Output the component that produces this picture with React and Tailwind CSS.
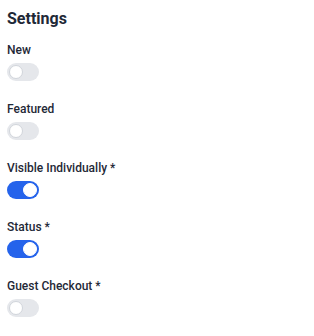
import React, { useState } from 'react';

const initial = [
  { key: 'new', label: 'New', on: false },
  { key: 'featured', label: 'Featured', on: false },
  { key: 'visible', label: 'Visible Individually *', on: true },
  { key: 'status', label: 'Status *', on: true },
  { key: 'guest', label: 'Guest Checkout *', on: false },
];

function Toggle({ on, onClick }) {
  return (
    <button
      type="button"
      onClick={onClick}
      className={`relative w-8 h-[18px] rounded-full transition-colors ${
        on ? 'bg-[#2563eb]' : 'bg-[#e5e7eb]'
      }`}
    >
      <span
        className={`absolute top-[2px] w-[14px] h-[14px] rounded-full bg-white border ${
          on ? 'left-[16px] border-white' : 'left-[2px] border-[#d1d5db]'
        }`}
      />
    </button>
  );
}

export default function App() {
  const [items, setItems] = useState(initial);

  const flip = (key) =>
    setItems((prev) => prev.map((i) => (i.key === key ? { ...i, on: !i.on } : i)));

  return (
    <div className="bg-white w-[314px] h-[336px] px-[7px] pt-[8px] font-['Roboto',sans-serif] text-[#1f2937]">
      <h2 className="text-[16px] leading-[22px] font-bold">Settings</h2>

      <div className="mt-[12px] flex flex-col gap-[20px]">
        {items.map((i) => (
          <div key={i.key} className="flex flex-col gap-[5px]">
            <label className="text-[12px] leading-[16px] font-medium">{i.label}</label>
            <Toggle on={i.on} onClick={() => flip(i.key)} />
          </div>
        ))}
      </div>
    </div>
  );
}
